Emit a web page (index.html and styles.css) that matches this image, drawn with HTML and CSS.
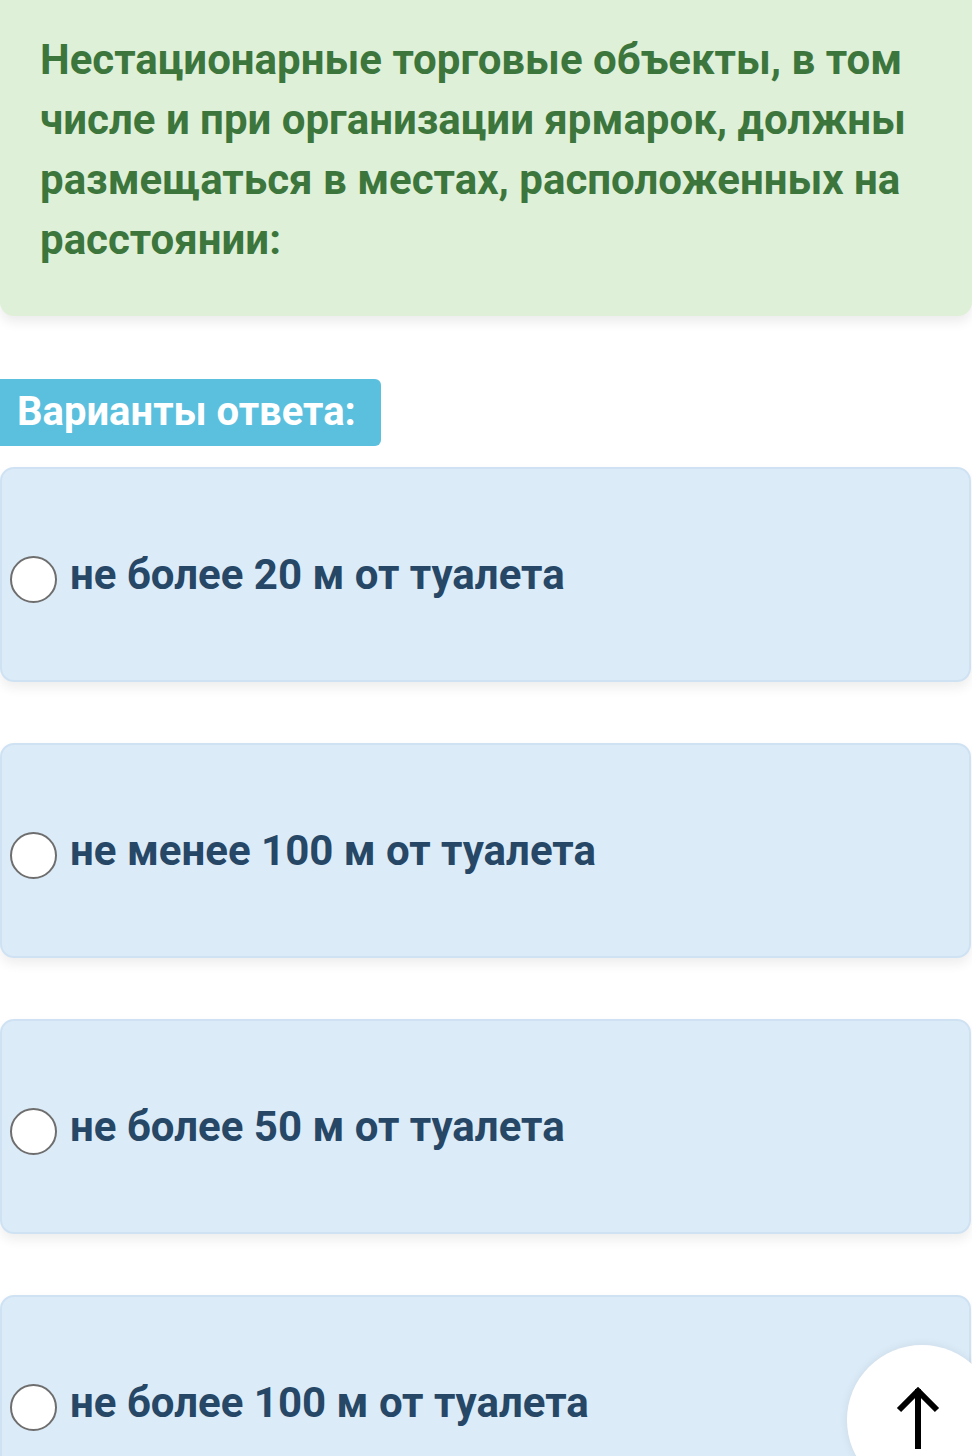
FILE: index.html
```html
<!DOCTYPE html>
<html lang="ru">
<head>
  <meta charset="UTF-8">
  <meta name="viewport" content="width=device-width, initial-scale=1.0">
  <title>Вопрос</title>
  <link rel="stylesheet" href="styles.css">
</head>
<body>
  <div class="question">
    Нестационарные торговые объекты, в том числе и при организации ярмарок, должны размещаться в местах, расположенных на расстоянии:
  </div>
  <div class="answers-label">Варианты ответа:</div>
  <div class="answers">
    <label class="answer">
      <span class="radio"></span>
      <span class="answer-text">не более 20 м от туалета</span>
    </label>
    <label class="answer">
      <span class="radio"></span>
      <span class="answer-text">не менее 100 м от туалета</span>
    </label>
    <label class="answer">
      <span class="radio"></span>
      <span class="answer-text">не более 50 м от туалета</span>
    </label>
    <label class="answer">
      <span class="radio"></span>
      <span class="answer-text">не более 100 м от туалета</span>
    </label>
  </div>
  <a href="#" class="to-top" aria-label="Наверх">
    <svg width="48" height="70" viewBox="0 0 48 70">
      <path d="M24 8 V68 M5 29 L24 10 L43 29" fill="none" stroke="#000" stroke-width="6"/>
    </svg>
  </a>
</body>
</html>
```

FILE: styles.css
```css
body {
  font-family: Roboto, 'Liberation Sans', sans-serif;
  background-color: #FFFFFF;
  margin: 0;
  overflow: hidden;
}
.question {
  margin-top: -20px;
  padding: 50px 40px 46px 40px;
  background-color: #DFF0D8;
  color: #3C763D;
  font-size: 42px;
  font-weight: 700;
  line-height: 60px;
  border-radius: 14px;
  box-shadow: 0 6px 12px rgba(0, 0, 0, 0.08);
}
.answers-label {
  display: inline-block;
  margin-top: 63px;
  padding: 0 25px 0 17px;
  height: 67px;
  line-height: 66px;
  background-color: #5BC0DE;
  color: #FFFFFF;
  font-size: 40px;
  font-weight: 700;
  border-radius: 0 6px 6px 0;
}
.answers {
  display: flex;
  flex-direction: column;
  gap: 61px;
  margin-top: 21px;
  margin-right: 1px;
}
.answer {
  display: flex;
  align-items: center;
  gap: 13px;
  min-height: 211px;
  padding-left: 8px;
  background-color: #DCEBF8;
  border: 2px solid #CFE2F3;
  border-radius: 14px;
  box-shadow: 0 6px 12px rgba(0, 0, 0, 0.07);
}
.radio {
  width: 43px;
  height: 43px;
  border: 2px solid #6E6E6E;
  border-radius: 50%;
  background-color: #FFFFFF;
  flex-shrink: 0;
  margin-top: 10px;
}
.answer-text {
  color: #264766;
  font-size: 42px;
  font-weight: 700;
  line-height: 60px;
}
.to-top {
  position: fixed;
  right: -25px;
  bottom: -39px;
  width: 150px;
  height: 150px;
  border-radius: 50%;
  background-color: #FFFFFF;
  box-shadow: 0 0 10px rgba(0, 0, 0, 0.08);
  display: flex;
  justify-content: center;
  padding-top: 36px;
  box-sizing: border-box;
}
.to-top svg {
  margin-left: -8px;
}
```
